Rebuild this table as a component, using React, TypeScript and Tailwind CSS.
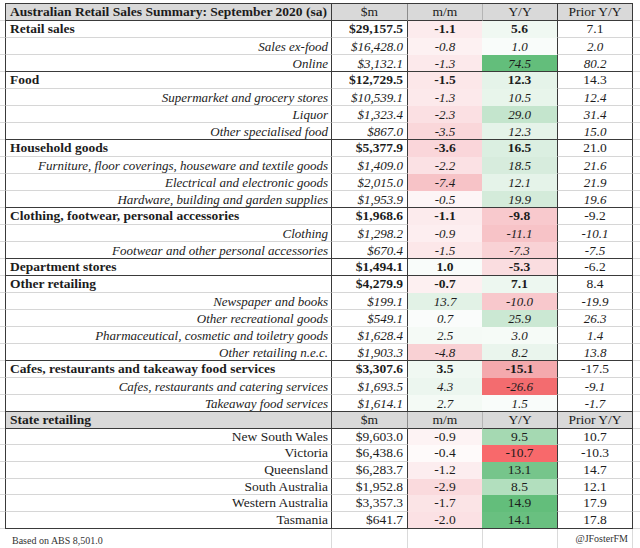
import React from 'react'

type Kind = 'cat' | 'sub' | 'state'

interface Line {
  kind: Kind
  label: string
  m: string
  mm: string
  yy: string
  prior: string
  mmBg: string
  yyBg: string
  h?: string
}

const retail: Line[] = [
  { kind: 'cat', label: 'Retail sales', m: '$29,157.5', mm: '-1.1', yy: '5.6', prior: '7.1', mmBg: 'bg-[#fcebed]', yyBg: 'bg-[#f0f8f2]' },
  { kind: 'sub', label: 'Sales ex-food', m: '$16,428.0', mm: '-0.8', yy: '1.0', prior: '2.0', mmBg: 'bg-[#fdf1f2]', yyBg: 'bg-[#f9fcfa]' },
  { kind: 'sub', label: 'Online', m: '$3,132.1', mm: '-1.3', yy: '74.5', prior: '80.2', mmBg: 'bg-[#fce9eb]', yyBg: 'bg-[#63be7b]' },
  { kind: 'cat', label: 'Food', m: '$12,729.5', mm: '-1.5', yy: '12.3', prior: '14.3', mmBg: 'bg-[#fce7e9]', yyBg: 'bg-[#e5f3e9]' },
  { kind: 'sub', label: 'Supermarket and grocery stores', m: '$10,539.1', mm: '-1.3', yy: '10.5', prior: '12.4', mmBg: 'bg-[#fce9eb]', yyBg: 'bg-[#e8f5eb]' },
  { kind: 'sub', label: 'Liquor', m: '$1,323.4', mm: '-2.3', yy: '29.0', prior: '31.4', mmBg: 'bg-[#fbe0e3]', yyBg: 'bg-[#c4e5cd]' },
  { kind: 'sub', label: 'Other specialised food', m: '$867.0', mm: '-3.5', yy: '12.3', prior: '15.0', mmBg: 'bg-[#fad7da]', yyBg: 'bg-[#e5f3e9]' },
  { kind: 'cat', label: 'Household goods', m: '$5,377.9', mm: '-3.6', yy: '16.5', prior: '21.0', mmBg: 'bg-[#fad6da]', yyBg: 'bg-[#dbefe1]' },
  { kind: 'sub', label: 'Furniture, floor coverings, houseware and textile goods', m: '$1,409.0', mm: '-2.2', yy: '18.5', prior: '21.6', mmBg: 'bg-[#fbe1e4]', yyBg: 'bg-[#d7ecdd]' },
  { kind: 'sub', label: 'Electrical and electronic goods', m: '$2,015.0', mm: '-7.4', yy: '12.1', prior: '21.9', mmBg: 'bg-[#f7c3c7]', yyBg: 'bg-[#e5f3e9]' },
  { kind: 'sub', label: 'Hardware, building and garden supplies', m: '$1,953.9', mm: '-0.5', yy: '19.9', prior: '19.6', mmBg: 'bg-[#fdf5f6]', yyBg: 'bg-[#d4ebda]' },
  { kind: 'cat', label: 'Clothing, footwear, personal accessories', m: '$1,968.6', mm: '-1.1', yy: '-9.8', prior: '-9.2', mmBg: 'bg-[#fcebed]', yyBg: 'bg-[#f8c9cd]' },
  { kind: 'sub', label: 'Clothing', m: '$1,298.2', mm: '-0.9', yy: '-11.1', prior: '-10.1', mmBg: 'bg-[#fdeef0]', yyBg: 'bg-[#f7c3c7]' },
  { kind: 'sub', label: 'Footwear and other personal accessories', m: '$670.4', mm: '-1.5', yy: '-7.3', prior: '-7.5', mmBg: 'bg-[#fce7e9]', yyBg: 'bg-[#f9d2d5]' },
  { kind: 'cat', label: 'Department stores', m: '$1,494.1', mm: '1.0', yy: '-5.3', prior: '-6.2', mmBg: 'bg-[#f9fcfa]', yyBg: 'bg-[#fadde0]' },
  { kind: 'cat', label: 'Other retailing', m: '$4,279.9', mm: '-0.7', yy: '7.1', prior: '8.4', mmBg: 'bg-[#fdf0f1]', yyBg: 'bg-[#edf7f0]' },
  { kind: 'sub', label: 'Newspaper and books', m: '$199.1', mm: '13.7', yy: '-10.0', prior: '-19.9', mmBg: 'bg-[#e2f2e6]', yyBg: 'bg-[#f8c8cc]' },
  { kind: 'sub', label: 'Other recreational goods', m: '$549.1', mm: '0.7', yy: '25.9', prior: '26.3', mmBg: 'bg-[#fafcfb]', yyBg: 'bg-[#cbe8d3]' },
  { kind: 'sub', label: 'Pharmaceutical, cosmetic and toiletry goods', m: '$1,628.4', mm: '2.5', yy: '3.0', prior: '1.4', mmBg: 'bg-[#f5faf6]', yyBg: 'bg-[#f6fbf7]' },
  { kind: 'sub', label: 'Other retailing n.e.c.', m: '$1,903.3', mm: '-4.8', yy: '8.2', prior: '13.8', mmBg: 'bg-[#f9d1d4]', yyBg: 'bg-[#eaf5ed]' },
  { kind: 'cat', label: 'Cafes, restaurants and takeaway food services', m: '$3,307.6', mm: '3.5', yy: '-15.1', prior: '-17.5', mmBg: 'bg-[#f0f8f2]', yyBg: 'bg-[#f4a9ad]' },
  { kind: 'sub', label: 'Cafes, restaurants and catering services', m: '$1,693.5', mm: '4.3', yy: '-26.6', prior: '-9.1', mmBg: 'bg-[#ecf6ef]', yyBg: 'bg-[#f36c6f]' },
  { kind: 'sub', label: 'Takeaway food services', m: '$1,614.1', mm: '2.7', yy: '1.5', prior: '-1.7', mmBg: 'bg-[#f4faf5]', yyBg: 'bg-[#f9fcfa]' },
]

const states: Line[] = [
  { kind: 'state', label: 'New South Wales', m: '$9,603.0', mm: '-0.9', yy: '9.5', prior: '10.7', mmBg: 'bg-[#fdf3f4]', yyBg: 'bg-[#a5d9b2]', h: 'h-[16px]' },
  { kind: 'state', label: 'Victoria', m: '$6,438.6', mm: '-0.4', yy: '-10.7', prior: '-10.3', mmBg: 'bg-[#fefafa]', yyBg: 'bg-[#f8696b]' },
  { kind: 'state', label: 'Queensland', m: '$6,283.7', mm: '-1.2', yy: '13.1', prior: '14.7', mmBg: 'bg-[#fcedef]', yyBg: 'bg-[#76c58b]' },
  { kind: 'state', label: 'South Australia', m: '$1,952.8', mm: '-2.9', yy: '8.5', prior: '12.1', mmBg: 'bg-[#fadadd]', yyBg: 'bg-[#b2dfbe]', h: 'h-[16px]' },
  { kind: 'state', label: 'Western Australia', m: '$3,357.3', mm: '-1.7', yy: '14.9', prior: '17.9', mmBg: 'bg-[#fbe4e6]', yyBg: 'bg-[#63be7b]' },
  { kind: 'state', label: 'Tasmania', m: '$641.7', mm: '-2.0', yy: '14.1', prior: '17.8', mmBg: 'bg-[#fbe1e4]', yyBg: 'bg-[#69c080]' },
]

function HeaderRow({ title }: { title: string }) {
  return (
    <div className="flex h-[17px]">
      <div className="w-[5px] border-b border-[#dadada]" />
      <div className="flex w-[326px] items-center border-b border-l border-[#3a3a3a] bg-[#d9d9d9] pl-[4px] font-bold">
        {title}
      </div>
      <div className="flex w-[76px] items-center justify-center border-b border-l border-[#3a3a3a] bg-[#d9d9d9]">$m</div>
      <div className="flex w-[75px] items-center justify-center border-b border-l border-b-[#3a3a3a] border-l-[#8c8c8c] bg-[#d9d9d9]">m/m</div>
      <div className="flex w-[75px] items-center justify-center border-b border-l border-b-[#3a3a3a] border-l-[#b5b5b5] bg-[#d9d9d9]">Y/Y</div>
      <div className="flex w-[76px] items-center justify-center border-x border-b border-[#3a3a3a] bg-[#d9d9d9]">Prior Y/Y</div>
      <div className="w-[7px] border-b border-[#dadada]" />
    </div>
  )
}

function DataRow({ row, darkBottom }: { row: Line; darkBottom: boolean }) {
  const bold = row.kind === 'cat'
  const italic = row.kind === 'sub'
  const line = darkBottom ? 'border-b-[#3a3a3a]' : 'border-b-[#d6d6d6]'
  const fillLine = darkBottom ? 'border-b-[#3a3a3a]' : 'border-b-transparent'
  const weight = bold ? 'font-bold' : 'font-normal'
  const style = italic ? 'italic text-[13px]' : 'not-italic'

  return (
    <div className={`flex ${row.h ?? 'h-[17px]'}`}>
      <div className="w-[5px] border-b border-[#dadada]" />
      <div
        className={`flex w-[326px] items-center border-b border-l border-l-[#3a3a3a] ${line} ${weight} ${style} ${
          bold ? 'pl-[4px]' : 'justify-end pr-[3px]'
        }`}
      >
        {row.label}
      </div>
      <div className={`flex w-[76px] items-center justify-end border-b border-l border-l-[#3a3a3a] pr-[4px] ${line} ${weight} ${style}`}>
        {row.m}
      </div>
      <div className={`flex w-[75px] items-center justify-center border-b border-l border-l-[#3a3a3a] ${fillLine} ${row.mmBg} ${weight} ${style}`}>
        {row.mm}
      </div>
      <div className={`flex w-[75px] items-center justify-center border-b ${fillLine} ${row.yyBg} ${weight} ${style}`}>
        {row.yy}
      </div>
      <div className={`flex w-[76px] items-center justify-center border-x border-b border-x-[#3a3a3a] font-normal ${line} ${style}`}>
        {row.prior}
      </div>
      <div className="w-[7px] border-b border-[#dadada]" />
    </div>
  )
}

export default function App() {
  const nextIsBreak = (list: Line[], i: number) => i === list.length - 1 || list[i + 1].kind === 'cat'

  return (
    <div className="h-[548px] w-[640px] overflow-hidden bg-white font-['Liberation_Serif',serif] text-[13.5px] leading-none text-[#1c1c1c]">
      <div className="flex h-[4px]">
        <div className="w-[5px]" />
        <div className="flex-1 border-b border-[#3a3a3a]" />
        <div className="w-[7px]" />
      </div>
      <HeaderRow title="Australian Retail Sales Summary: September 2020 (sa)" />
      {retail.map((row, i) => (
        <DataRow key={row.label} row={row} darkBottom={nextIsBreak(retail, i)} />
      ))}
      <HeaderRow title="State retailing" />
      {states.map((row, i) => (
        <DataRow key={row.label} row={row} darkBottom={i === states.length - 1} />
      ))}
      <div className="flex h-[20px] text-[10px] text-[#333]">
        <div className="w-[5px] border-b border-[#dadada]" />
        <div className="flex w-[326px] items-center border-b border-[#dadada] pl-[7px] pt-[4px]">Based on ABS 8,501.0</div>
        <div className="w-[76px] border-b border-l border-[#dadada]" />
        <div className="w-[75px] border-b border-l border-[#dadada]" />
        <div className="w-[75px] border-b border-l border-[#dadada]" />
        <div className="flex w-[76px] items-center justify-end border-x border-b border-[#dadada] pr-[4px]">@JFosterFM</div>
        <div className="w-[7px] border-b border-[#dadada]" />
      </div>
    </div>
  )
}
